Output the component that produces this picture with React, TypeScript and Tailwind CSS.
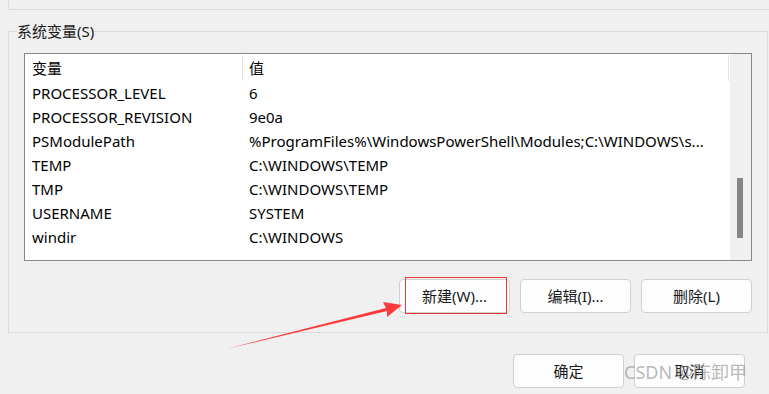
const rows = [
  { name: "PROCESSOR_LEVEL", value: "6" },
  { name: "PROCESSOR_REVISION", value: "9e0a" },
  { name: "PSModulePath", value: "%ProgramFiles%\\WindowsPowerShell\\Modules;C:\\WINDOWS\\s..." },
  { name: "TEMP", value: "C:\\WINDOWS\\TEMP" },
  { name: "TMP", value: "C:\\WINDOWS\\TEMP" },
  { name: "USERNAME", value: "SYSTEM" },
  { name: "windir", value: "C:\\WINDOWS" },
]

function Btn({ label }: { label: string }) {
  return (
    <button className="w-[111px] h-[34px] rounded-[4px] border border-[#d0d0d0] bg-[#fdfdfd] text-[15px] text-[#1a1a1a]">
      {label}
    </button>
  )
}

export default function App() {
  return (
    <div
      className="relative w-[769px] h-[394px] overflow-hidden bg-[#f0f0f0] text-[#000]"
      style={{ fontFamily: '"Noto Sans", "Noto Sans CJK SC", sans-serif' }}
    >
      {/* upper box (user variables), cut off */}
      <div className="h-[10px] ml-[8px] border-l border-b border-[#dadada]" />

      {/* system variables group */}
      <fieldset className="mt-[11px] ml-[8px] mr-[1px] h-[312px] border border-[#dadada] pl-[15px] pr-[15px]">
        <legend className="-ml-[7px] px-0 text-[15px] leading-[20px] text-[#1a1a1a]">系统变量(S)</legend>

        <div className="mt-[12px] h-[208px] border border-[#828790] bg-white flex">
          <div className="flex-1 flex flex-col">
            <div className="h-[27px] flex items-center text-[15px]">
              <div className="w-[217px] h-full flex items-center pl-[7px] pt-[1px]">变量</div>
              <div className="w-px h-[26px] bg-[#e5e5e5]" />
              <div className="flex-1 h-full flex items-center pl-[6px] pt-[1px]">值</div>
              <div className="w-px h-[26px] bg-[#e5e5e5] mr-[1px]" />
            </div>
            {rows.map((r) => (
              <div key={r.name} className="h-[24px] flex items-center text-[15px]">
                <div className="w-[217px] pl-[7px] whitespace-nowrap">{r.name}</div>
                <div className="flex-1 pl-[7px] whitespace-nowrap">{r.value}</div>
              </div>
            ))}
          </div>
          <div className="w-[21px] bg-[#f0f0f0] pt-[124px] pl-[7px]">
            <div className="w-[6px] h-[60px] bg-[#858585]" />
          </div>
        </div>

        <div className="mt-[18px] flex justify-end gap-[10px] pr-0">
          <Btn label="新建(W)..." />
          <Btn label="编辑(I)..." />
          <Btn label="删除(L)" />
        </div>
      </fieldset>

      {/* dialog buttons */}
      <div className="mt-[21px] flex justify-end gap-[10px] pr-[24px]">
        <Btn label="确定" />
        <Btn label="取消" />
      </div>

      {/* annotation: red box + arrow */}
      <div className="absolute left-[405px] top-[277px] w-[102px] h-[37px] border border-[#e53935]" />
      <svg className="absolute left-0 top-0" width="769" height="394" viewBox="0 0 769 394">
        <polygon points="226,349 386,308 383,302 402,305 387,317 387,311" fill="#fd3a3a" />
      </svg>

      {/* watermark */}
      <div className="absolute left-[624px] top-[359px] text-[18px] leading-[26px] text-[#8a8a8a]/60 whitespace-nowrap">
        CSDN @陈卸甲
      </div>
    </div>
  )
}
